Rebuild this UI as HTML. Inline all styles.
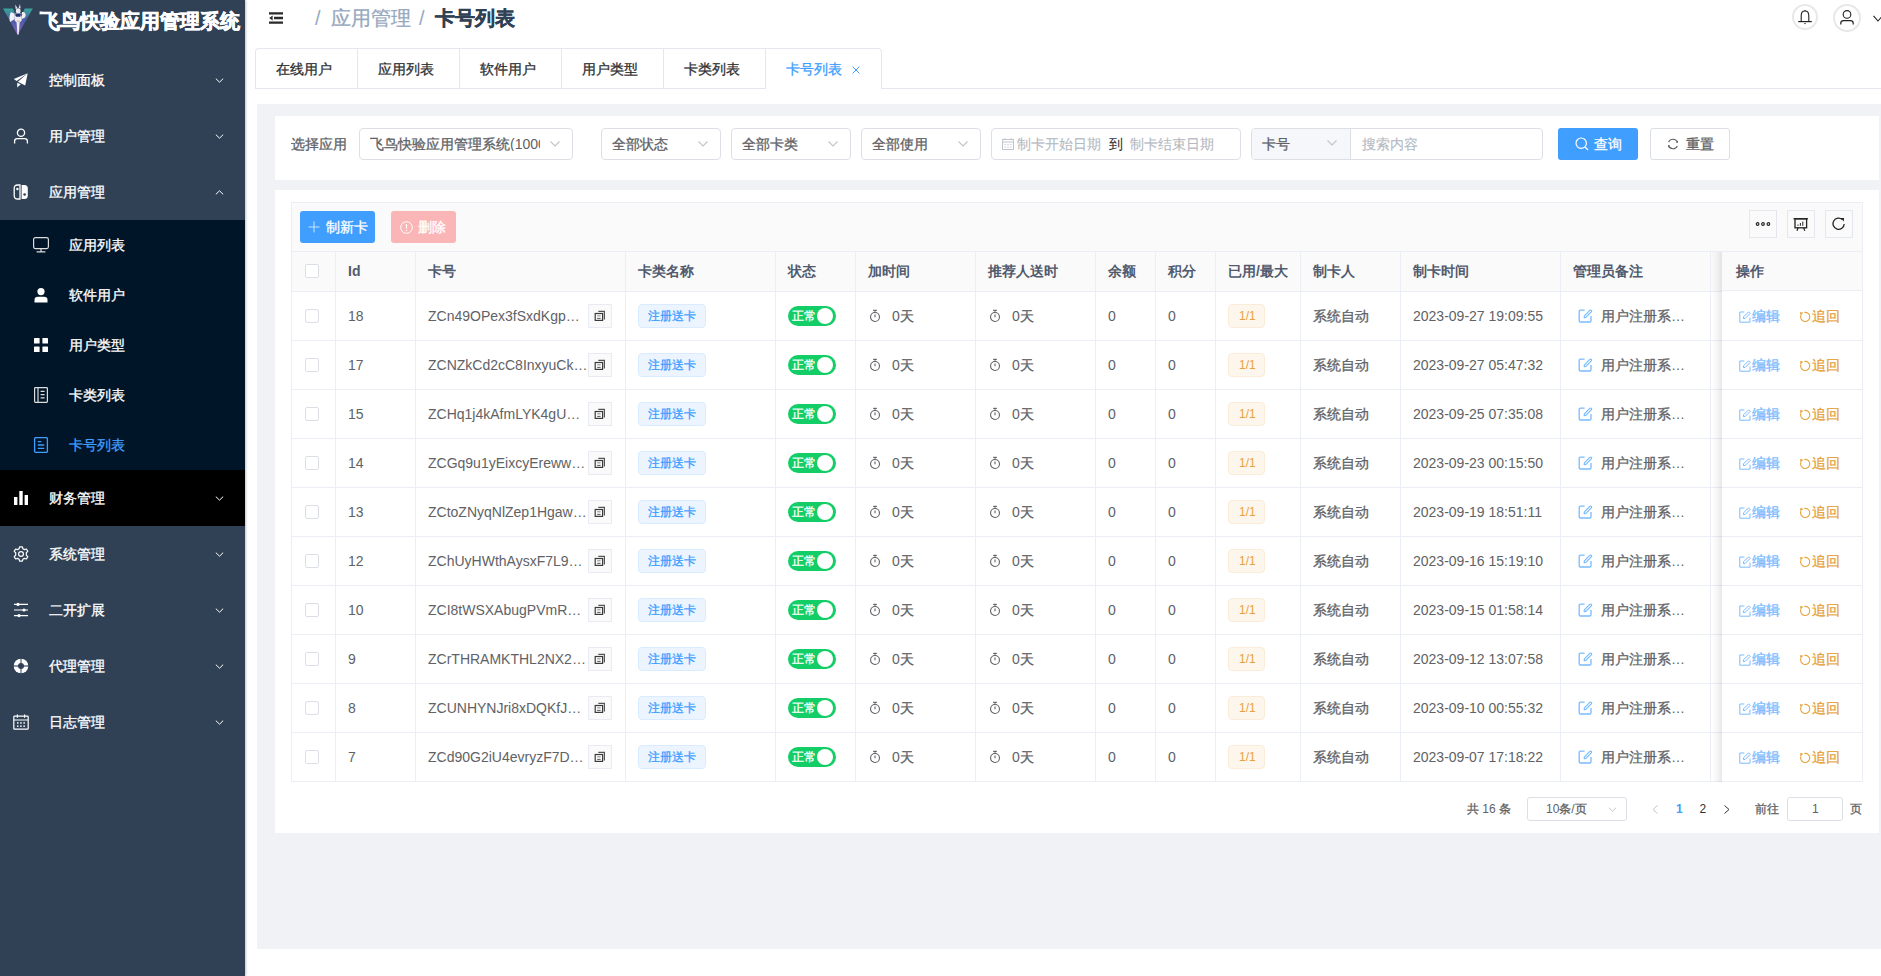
<!DOCTYPE html>
<html><head><meta charset="utf-8"><title>卡号列表</title><style>
*{box-sizing:border-box}
svg{display:block}
html,body{margin:0;padding:0}
body{width:1881px;height:976px;position:relative;overflow:hidden;background:#fff;font-family:"Liberation Sans",sans-serif;color:#606266}
.a{position:absolute}
.t{position:absolute;white-space:nowrap;line-height:1}
#side{left:0;top:0;width:245px;height:976px;background:#304156;box-shadow:1px 0 2px rgba(0,21,41,0.25)}
.mi{position:absolute;left:0;width:245px;height:56px;color:#fff;font-size:14px}
.mi .ic{position:absolute;left:13px;top:20px;width:16px;height:16px}
.mi .tx{position:absolute;left:49px;top:20px;line-height:16px}
.mi .ch{position:absolute;left:214.5px;top:25.6px;width:9px;height:5px;color:#fff}
.sub{position:absolute;left:0;top:220px;width:245px;height:250px;background:#001528}
.si{position:absolute;left:0;width:245px;height:50px;color:#fff;font-size:14px}
.si .ic{position:absolute;left:33px;top:17px;width:16px;height:16px}
.si .tx{position:absolute;left:69px;top:17px;line-height:16px}
.tab{position:absolute;top:48px;height:41px;border-top:1px solid #e4e7ed;border-left:1px solid #e4e7ed;font-size:14px;color:#303133}
.tab span{position:absolute;top:13px;line-height:14px;left:20px}
.sel{position:absolute;top:128px;height:32px;border:1px solid #dcdfe6;border-radius:4px;background:#fff;font-size:14px;color:#606266}
.sel .v{position:absolute;left:10px;top:8px;line-height:14px;white-space:nowrap;overflow:hidden}
.sel .ch{position:absolute;right:12px;top:12px;width:10px;height:6px;color:#c0c4cc}
.cell{position:absolute;font-size:14px;color:#606266;white-space:nowrap;line-height:14px}
.z{font-style:normal;-webkit-text-stroke:0.3px currentColor}
.ttl .z{-webkit-text-stroke:0.6px #fff}
.hd .z{-webkit-text-stroke:0}
.ph .z{-webkit-text-stroke:0.1px currentColor}
.hd{position:absolute;font-size:14px;color:#515a6e;font-weight:bold;white-space:nowrap;line-height:14px}
</style></head>
<body>
<div id="side" class="a"><div class="a" style="left:0px;top:0px"><svg width="40" height="40" viewBox="0 0 40 40">
<defs><linearGradient id="lg" x1="0" y1="0" x2="0" y2="1"><stop offset="0" stop-color="#37a89a"/><stop offset="0.45" stop-color="#4d5aa6"/><stop offset="1" stop-color="#8a66c0"/></linearGradient></defs>
<path d="M3 8.4 L32.8 8.4 L17.6 35 Z M12.8 8.4 L24.8 8.4 L18.6 21 Z" fill="url(#lg)" fill-rule="evenodd"/>
<path d="M15.2 4.4 L17.6 8.2 L15.6 9 Z M20 4 L18.6 8 L20.6 8.6 Z" fill="#e4e2ee"/>
<ellipse cx="18.2" cy="10.8" rx="2.4" ry="2.6" fill="#eeeaf2"/>
<path d="M11 12 Q8.6 16 10 22 Q12 21 14.6 19 L15 14 Z" fill="#f2f0f6"/>
<path d="M22 12 Q25.8 11.6 25.6 15.6 Q25 19 21.6 18.6 Z" fill="#f2f0f6"/>
<path d="M15.4 13 L21.2 13 L21.8 20.6 L19.6 22.4 L18.7 34.6 L17.4 34.6 L16.6 22.6 L14.6 20.6 Z" fill="#ecebf2"/>
<path d="M15.4 13.6 L21 13.6 L20.4 16.8 L16.2 16.8 Z" fill="#23306a"/>
<path d="M14.4 14.4 L15.6 14 L15.4 16.6 Z M21 14 L22.4 14.6 L21 16.4 Z" fill="#3a4a8e"/>
<path d="M16.8 20.8 L20 20.8 L19.8 21.6 L17 21.6 Z" fill="#e08a80"/>
</svg></div><div class="t ttl" style="left:40px;top:11px;font-size:20px;font-weight:bold;color:#fff;line-height:20px"><i class="z">飞鸟快验应用管理系统</i></div><div class="mi" style="top:52px;"><div class="ic"><svg width="16" height="16" viewBox="0 0 16 16"><path d="M0.8 6.9 L14.7 1.2 L3.6 8.9 Z M4.9 9.7 L14.7 1.2 L12.2 13.4 Z M4.2 10.8 L4.2 15.6 L7.8 12.3 Z" fill="#fff"/></svg></div><div class="tx"><i class="z">控制面板</i></div><div class="ch"><svg width="9" height="5" viewBox="0 0 9 5"><path d="M0.8 0.6 L4.5 4.2 L8.2 0.6" fill="none" stroke="currentColor" stroke-width="1"/></svg></div></div><div class="mi" style="top:108px;"><div class="ic"><svg width="16" height="16" viewBox="0 0 16 16"><circle cx="8" cy="4.8" r="3.6" fill="none" stroke="#fff" stroke-width="1.3"/><path d="M1.6 15.5 V13.2 Q1.6 10.6 4.4 10.6 H11.6 Q14.4 10.6 14.4 13.2 V15.5" fill="none" stroke="#fff" stroke-width="1.3"/></svg></div><div class="tx"><i class="z">用户管理</i></div><div class="ch"><svg width="9" height="5" viewBox="0 0 9 5"><path d="M0.8 0.6 L4.5 4.2 L8.2 0.6" fill="none" stroke="currentColor" stroke-width="1"/></svg></div></div><div class="mi" style="top:164px;"><div class="ic"><svg width="16" height="16" viewBox="0 0 16 16"><path d="M7 1 H4.5 Q1.2 1 1.2 4.5 V11.5 Q1.2 15 4.5 15 H7 Z" fill="none" stroke="#fff" stroke-width="1.3"/><circle cx="4.4" cy="5" r="1.2" fill="#fff"/><path d="M8.6 1 H11.5 Q14.8 1 14.8 4.5 V11.5 Q14.8 15 11.5 15 H8.6 Z" fill="#fff"/><circle cx="11.6" cy="10.5" r="1.3" fill="#304156"/></svg></div><div class="tx"><i class="z">应用管理</i></div><div class="ch"><svg width="9" height="5" viewBox="0 0 9 5"><path d="M0.8 4.4 L4.5 0.8 L8.2 4.4" fill="none" stroke="currentColor" stroke-width="1"/></svg></div></div><div class="sub"><div class="si" style="top:0px;"><div class="ic"><svg width="16" height="16" viewBox="0 0 16 16"><rect x="0.6" y="0.6" width="14.8" height="11" rx="1.8" fill="none" stroke="#ddd" stroke-width="1.2"/><path d="M8 11.6 V14.6 M3.6 14.8 H12.4" stroke="#ddd" stroke-width="1.2"/></svg></div><div class="tx"><i class="z">应用列表</i></div></div><div class="si" style="top:50px;"><div class="ic"><svg width="16" height="16" viewBox="0 0 16 16"><circle cx="8" cy="4.6" r="3.6" fill="#fff"/><path d="M1.5 15.5 V13 Q1.5 9.8 5 9.8 H11 Q14.5 9.8 14.5 13 V15.5 Z" fill="#fff"/></svg></div><div class="tx"><i class="z">软件用户</i></div></div><div class="si" style="top:100px;"><div class="ic"><svg width="16" height="16" viewBox="0 0 16 16"><rect x="1" y="1" width="5.6" height="5.6" rx="0.6" fill="#fff"/><rect x="9.4" y="1" width="5.6" height="5.6" rx="0.6" fill="#fff"/><rect x="1" y="9.4" width="5.6" height="5.6" rx="0.6" fill="#fff"/><rect x="9.4" y="9.4" width="5.6" height="5.6" rx="0.6" fill="#fff"/></svg></div><div class="tx"><i class="z">用户类型</i></div></div><div class="si" style="top:150px;"><div class="ic"><svg width="16" height="16" viewBox="0 0 16 16"><rect x="1.6" y="0.6" width="12.8" height="14.8" rx="0.8" fill="none" stroke="#ddd" stroke-width="1.2"/><path d="M5 0.6 V15.4 M7.6 4.4 H11.6 M7.6 7.6 H11.6 M7.6 10.8 H11.6" stroke="#ddd" stroke-width="1.2"/></svg></div><div class="tx"><i class="z">卡类列表</i></div></div><div class="si" style="top:200px;color:#409eff;"><div class="ic"><svg width="16" height="16" viewBox="0 0 16 16"><rect x="1.6" y="0.6" width="12.8" height="14.8" rx="1.2" fill="none" stroke="#409eff" stroke-width="1.3"/><path d="M4.8 4.6 H8.4 M4.8 8 H11.2 M4.8 11.4 H11.2" stroke="#409eff" stroke-width="1.3"/></svg></div><div class="tx"><i class="z">卡号列表</i></div></div></div><div class="mi" style="top:470px;background:#000;"><div class="ic"><svg width="16" height="16" viewBox="0 0 16 16"><rect x="1" y="7" width="3.4" height="8" fill="#fff"/><rect x="6.3" y="1" width="3.4" height="14" fill="#fff"/><rect x="11.6" y="5" width="3.4" height="10" fill="#fff"/></svg></div><div class="tx"><i class="z">财务管理</i></div><div class="ch"><svg width="9" height="5" viewBox="0 0 9 5"><path d="M0.8 0.6 L4.5 4.2 L8.2 0.6" fill="none" stroke="currentColor" stroke-width="1"/></svg></div></div><div class="mi" style="top:526px;"><div class="ic"><svg width="16" height="16" viewBox="0 0 16 16"><path d="M6.6 0.8 H9.4 L9.9 2.8 L11.4 3.6 L13.4 3 L14.8 5.4 L13.3 6.8 V9.2 L14.8 10.6 L13.4 13 L11.4 12.4 L9.9 13.2 L9.4 15.2 H6.6 L6.1 13.2 L4.6 12.4 L2.6 13 L1.2 10.6 L2.7 9.2 V6.8 L1.2 5.4 L2.6 3 L4.6 3.6 L6.1 2.8 Z" fill="none" stroke="#fff" stroke-width="1.2" stroke-linejoin="round"/><circle cx="8" cy="8" r="2.4" fill="none" stroke="#fff" stroke-width="1.2"/></svg></div><div class="tx"><i class="z">系统管理</i></div><div class="ch"><svg width="9" height="5" viewBox="0 0 9 5"><path d="M0.8 0.6 L4.5 4.2 L8.2 0.6" fill="none" stroke="currentColor" stroke-width="1"/></svg></div></div><div class="mi" style="top:582px;"><div class="ic"><svg width="16" height="16" viewBox="0 0 16 16"><path d="M1 2.4 H15 M1 8 H15 M1 13.6 H15" stroke="#fff" stroke-width="1.2"/><circle cx="5" cy="2.4" r="1.6" fill="#fff"/><circle cx="11" cy="8" r="1.6" fill="#fff"/><circle cx="6" cy="13.6" r="1.6" fill="#fff"/></svg></div><div class="tx"><i class="z">二开扩展</i></div><div class="ch"><svg width="9" height="5" viewBox="0 0 9 5"><path d="M0.8 0.6 L4.5 4.2 L8.2 0.6" fill="none" stroke="currentColor" stroke-width="1"/></svg></div></div><div class="mi" style="top:638px;"><div class="ic"><svg width="16" height="16" viewBox="0 0 16 16"><circle cx="8" cy="8" r="7.3" fill="#fff"/><path d="M8 0 V16 M0 8 H16" stroke="#304156" stroke-width="1.3" stroke-opacity="0.75"/><circle cx="8" cy="8" r="3" fill="#304156"/></svg></div><div class="tx"><i class="z">代理管理</i></div><div class="ch"><svg width="9" height="5" viewBox="0 0 9 5"><path d="M0.8 0.6 L4.5 4.2 L8.2 0.6" fill="none" stroke="currentColor" stroke-width="1"/></svg></div></div><div class="mi" style="top:694px;"><div class="ic"><svg width="16" height="16" viewBox="0 0 16 16"><rect x="0.8" y="2.2" width="14.4" height="13" rx="0.8" fill="none" stroke="#fff" stroke-width="1.2"/><path d="M0.8 6 H15.2 M4.4 0.6 V3.8 M11.6 0.6 V3.8" stroke="#fff" stroke-width="1.2"/><g fill="#fff"><rect x="4" y="8.2" width="1.5" height="1.5"/><rect x="7.2" y="8.2" width="1.5" height="1.5"/><rect x="10.4" y="8.2" width="1.5" height="1.5"/><rect x="4" y="11.4" width="1.5" height="1.5"/><rect x="7.2" y="11.4" width="1.5" height="1.5"/><rect x="10.4" y="11.4" width="1.5" height="1.5"/></g></svg></div><div class="tx"><i class="z">日志管理</i></div><div class="ch"><svg width="9" height="5" viewBox="0 0 9 5"><path d="M0.8 0.6 L4.5 4.2 L8.2 0.6" fill="none" stroke="currentColor" stroke-width="1"/></svg></div></div></div>
<div class="a" style="left:269px;top:12px"><svg width="14" height="12" viewBox="0 0 14 12"><path d="M0 1.4 H14 M5 6 H14 M0 10.6 H14" stroke="#2a2a2a" stroke-width="2.3"/><path d="M0.2 6 L3.6 3.6 V8.4 Z" fill="#2a2a2a"/></svg></div><div class="t" style="left:315px;top:8px;font-size:20px;line-height:20px;color:#97a8be">/</div><div class="t" style="left:331px;top:8px;font-size:20px;line-height:20px;color:#97a8be"><i class="z">应用管理</i></div><div class="t" style="left:419px;top:8px;font-size:20px;line-height:20px;color:#97a8be">/</div><div class="t" style="left:435px;top:8px;font-size:20px;line-height:20px;color:#304156;font-weight:bold"><i class="z">卡号列表</i></div><div class="a" style="left:1792px;top:4px;width:26px;height:26px;border:2px solid #e8e8e8;border-radius:50%"></div><div class="a" style="left:1798px;top:9px"><svg width="14" height="16" viewBox="0 0 14 16"><path d="M3.2 12.5 V6.8 Q3.2 2 7 2 Q10.8 2 10.8 6.8 V12.5" fill="none" stroke="#222" stroke-width="1.1"/><path d="M0.2 12.6 H13.8" stroke="#222" stroke-width="1.2"/><path d="M6.1 2 L7 0.8 L7.9 2 Z" fill="#222"/><path d="M6.3 14.6 H7.7" stroke="#222" stroke-width="1"/></svg></div><div class="a" style="left:1833px;top:4px;width:28px;height:28px;border:2px solid #e8e8e8;border-radius:50%"></div><div class="a" style="left:1840px;top:10px"><svg width="14" height="15" viewBox="0 0 14 15"><circle cx="7" cy="4.4" r="3.8" fill="none" stroke="#222" stroke-width="1.1"/><path d="M0.8 14.6 V13 Q0.8 10.6 3.6 10.6 H10.4 Q13.2 10.6 13.2 13 V14.6" fill="none" stroke="#222" stroke-width="1.2"/></svg></div><div class="a" style="left:1873px;top:15px"><svg width="10" height="8" viewBox="0 0 10 8"><path d="M0.5 0.8 L5 6 L9.5 0.8" fill="none" stroke="#222" stroke-width="1.1"/></svg></div><div class="tab" style="left:255px;width:102px;border-bottom:1px solid #e4e7ed;border-top-left-radius:4px;"><span><i class="z">在线用户</i></span></div><div class="tab" style="left:357px;width:102px;border-bottom:1px solid #e4e7ed;"><span><i class="z">应用列表</i></span></div><div class="tab" style="left:459px;width:102px;border-bottom:1px solid #e4e7ed;"><span><i class="z">软件用户</i></span></div><div class="tab" style="left:561px;width:102px;border-bottom:1px solid #e4e7ed;"><span><i class="z">用户类型</i></span></div><div class="tab" style="left:663px;width:102px;border-bottom:1px solid #e4e7ed;"><span><i class="z">卡类列表</i></span></div><div class="tab" style="left:765px;width:117px;border-right:1px solid #e4e7ed;border-top-right-radius:4px;color:#409eff"><span><i class="z">卡号列表</i></span><svg class="a" style="left:86px;top:17px" width="8" height="8" viewBox="0 0 8 8"><path d="M0.6 0.6 L7.4 7.4 M7.4 0.6 L0.6 7.4" stroke="#409eff" stroke-width="1"/></svg></div><div class="a" style="left:881px;top:88px;width:1000px;height:1px;background:#e4e7ed"></div><div class="a" style="left:257px;top:104px;width:1624px;height:845px;background:#f0f2f5"></div><div class="a" style="left:275px;top:116px;width:1604px;height:64px;background:#fff"></div><div class="t" style="left:291px;top:137px;font-size:14px;line-height:14px;color:#606266"><i class="z">选择应用</i></div><div class="sel" style="left:359px;width:214px;"><div class="v" style="width:170px"><i class="z">飞鸟快验应用管理系统</i>(10001)</div><div class="ch"><svg width="10" height="6" viewBox="0 0 10 6"><path d="M0.5 0.5 L5 5 L9.5 0.5" fill="none" stroke="currentColor" stroke-width="1.1"/></svg></div></div><div class="sel" style="left:601px;width:120px;"><div class="v" style="width:76px"><i class="z">全部状态</i></div><div class="ch"><svg width="10" height="6" viewBox="0 0 10 6"><path d="M0.5 0.5 L5 5 L9.5 0.5" fill="none" stroke="currentColor" stroke-width="1.1"/></svg></div></div><div class="sel" style="left:731px;width:120px;"><div class="v" style="width:76px"><i class="z">全部卡类</i></div><div class="ch"><svg width="10" height="6" viewBox="0 0 10 6"><path d="M0.5 0.5 L5 5 L9.5 0.5" fill="none" stroke="currentColor" stroke-width="1.1"/></svg></div></div><div class="sel" style="left:861px;width:120px;"><div class="v" style="width:76px"><i class="z">全部使用</i></div><div class="ch"><svg width="10" height="6" viewBox="0 0 10 6"><path d="M0.5 0.5 L5 5 L9.5 0.5" fill="none" stroke="currentColor" stroke-width="1.1"/></svg></div></div><div class="sel" style="left:991px;width:250px"></div><div class="a" style="left:1002px;top:138px"><svg width="12" height="12" viewBox="0 0 12 12"><rect x="0.5" y="1.5" width="11" height="10" fill="none" stroke="#c0c4cc" stroke-width="1"/><path d="M0.5 4 H11.5 M3 0 V2 M9 0 V2" stroke="#c0c4cc"/><g fill="#c0c4cc"><rect x="2.5" y="6" width="1.2" height="1"/><rect x="5.4" y="6" width="1.2" height="1"/><rect x="8.3" y="6" width="1.2" height="1"/><rect x="2.5" y="8.5" width="1.2" height="1"/><rect x="5.4" y="8.5" width="1.2" height="1"/><rect x="8.3" y="8.5" width="1.2" height="1"/></g></svg></div><div class="t ph" style="left:1017px;top:137px;font-size:14px;line-height:14px;color:#b4b9c2"><i class="z">制卡开始日期</i></div><div class="t ph" style="left:1109px;top:137px;font-size:14px;line-height:14px;color:#303133"><i class="z">到</i></div><div class="t ph" style="left:1130px;top:137px;font-size:14px;line-height:14px;color:#b4b9c2"><i class="z">制卡结束日期</i></div><div class="sel" style="left:1251px;width:292px"></div><div class="a" style="left:1252px;top:129px;width:99px;height:30px;background:#f5f7fa;border-right:1px solid #dcdfe6;border-radius:3px 0 0 3px"></div><div class="t" style="left:1262px;top:137px;font-size:14px;line-height:14px;color:#606266"><i class="z">卡号</i></div><div class="a" style="left:1327px;top:140px;width:10px;height:6px;color:#c0c4cc"><svg width="10" height="6" viewBox="0 0 10 6"><path d="M0.5 0.5 L5 5 L9.5 0.5" fill="none" stroke="currentColor" stroke-width="1.1"/></svg></div><div class="t ph" style="left:1362px;top:137px;font-size:14px;line-height:14px;color:#b4b9c2"><i class="z">搜索内容</i></div><div class="a" style="left:1558px;top:128px;width:80px;height:32px;background:#409eff;border-radius:3px"></div><div class="a" style="left:1575px;top:137px"><svg width="14" height="14" viewBox="0 0 14 14"><circle cx="6.2" cy="6.2" r="5.2" fill="none" stroke="#fff" stroke-width="1.2"/><path d="M10 10 L13 13" stroke="#fff" stroke-width="1.2"/></svg></div><div class="t" style="left:1594px;top:137px;font-size:14px;line-height:14px;color:#fff"><i class="z">查询</i></div><div class="a" style="left:1650px;top:128px;width:80px;height:32px;border:1px solid #dcdfe6;border-radius:3px;background:#fff"></div><div class="a" style="left:1667px;top:138px"><svg width="12" height="12" viewBox="0 0 12 12"><path d="M10.5 4.5 A4.8 4.8 0 0 0 1.6 4" fill="none" stroke="#606266" stroke-width="1.1"/><path d="M1.5 7.5 A4.8 4.8 0 0 0 10.4 8" fill="none" stroke="#606266" stroke-width="1.1"/><path d="M8.8 4.6 L11 4.8 L11 2.4 Z M3.2 7.4 L1 7.2 L1 9.6 Z" fill="#606266"/></svg></div><div class="t" style="left:1686px;top:137px;font-size:14px;line-height:14px;color:#606266"><i class="z">重置</i></div><div class="a" style="left:275px;top:190px;width:1604px;height:643px;background:#fff"></div><div class="a" style="left:291px;top:202px;width:1572px;height:50px;background:#fafafa;border:1px solid #ebeef5;border-bottom:none"></div><div class="a" style="left:300px;top:211px;width:75px;height:32px;background:#409eff;border-radius:3px"></div><div class="a" style="left:308px;top:221px"><svg width="12" height="12" viewBox="0 0 12 12"><path d="M6 0.5 V11.5 M0.5 6 H11.5" stroke="#fff" stroke-width="1.1" opacity="0.7"/></svg></div><div class="t" style="left:326px;top:220px;font-size:14px;line-height:14px;color:#fff"><i class="z">制新卡</i></div><div class="a" style="left:391px;top:211px;width:65px;height:32px;background:#fab6b6;border-radius:3px"></div><div class="a" style="left:400px;top:221px"><svg width="13" height="13" viewBox="0 0 13 13"><circle cx="6.5" cy="6.5" r="5.8" fill="none" stroke="#fff" stroke-width="1"/><path d="M6.5 3 V7.6" stroke="#fff" stroke-width="1.2"/><circle cx="6.5" cy="9.4" r="0.7" fill="#fff"/></svg></div><div class="t" style="left:418px;top:220px;font-size:14px;line-height:14px;color:#fff"><i class="z">删除</i></div><div class="a" style="left:1749px;top:210px;width:28px;height:28px;border:1px solid #e4e7ed;background:#fafafa"></div><div class="a" style="left:1787px;top:210px;width:28px;height:28px;border:1px solid #e4e7ed;background:#fafafa"></div><div class="a" style="left:1825px;top:210px;width:28px;height:28px;border:1px solid #e4e7ed;background:#fafafa"></div><div class="a" style="left:1755px;top:221px"><svg width="16" height="6" viewBox="0 0 16 6"><circle cx="2.6" cy="3" r="1.35" fill="none" stroke="#222" stroke-width="1.1"/><circle cx="8" cy="3" r="1.35" fill="none" stroke="#222" stroke-width="1.1"/><circle cx="13.4" cy="3" r="1.35" fill="none" stroke="#222" stroke-width="1.1"/></svg></div><div class="a" style="left:1793px;top:218px"><svg width="16" height="14" viewBox="0 0 16 14"><path d="M0.5 0.8 H15" stroke="#222" stroke-width="1.3"/><rect x="2" y="0.8" width="11.6" height="9" fill="none" stroke="#222" stroke-width="1.3"/><path d="M5 6.5 V7.8 M7.4 5 V7.8 M9.8 3.6 V7.8" stroke="#222" stroke-width="1"/><path d="M5 9.8 L4 12.8 M10.6 9.8 L11.8 12.8" stroke="#222" stroke-width="1.2"/></svg></div><div class="a" style="left:1832px;top:217px"><svg width="14" height="14" viewBox="0 0 14 14"><path d="M12.2 7 A5.6 5.6 0 1 1 10.4 2.6" fill="none" stroke="#222" stroke-width="1.3"/><path d="M8.6 1 L12 1 L11.8 4.6 Z" fill="#222"/></svg></div><div class="a" style="left:291px;top:251px;width:1572px;height:41px;background:#fafafa;border-top:1px solid #ebeef5;border-bottom:1px solid #ebeef5"></div><div class="a" style="left:291px;top:340px;width:1572px;height:1px;background:#ebeef5"></div><div class="a" style="left:291px;top:389px;width:1572px;height:1px;background:#ebeef5"></div><div class="a" style="left:291px;top:438px;width:1572px;height:1px;background:#ebeef5"></div><div class="a" style="left:291px;top:487px;width:1572px;height:1px;background:#ebeef5"></div><div class="a" style="left:291px;top:536px;width:1572px;height:1px;background:#ebeef5"></div><div class="a" style="left:291px;top:585px;width:1572px;height:1px;background:#ebeef5"></div><div class="a" style="left:291px;top:634px;width:1572px;height:1px;background:#ebeef5"></div><div class="a" style="left:291px;top:683px;width:1572px;height:1px;background:#ebeef5"></div><div class="a" style="left:291px;top:732px;width:1572px;height:1px;background:#ebeef5"></div><div class="a" style="left:291px;top:781px;width:1572px;height:1px;background:#ebeef5"></div><div class="a" style="left:291px;top:251px;width:1px;height:531px;background:#ebeef5"></div><div class="a" style="left:335px;top:251px;width:1px;height:531px;background:#ebeef5"></div><div class="a" style="left:415px;top:251px;width:1px;height:531px;background:#ebeef5"></div><div class="a" style="left:625px;top:251px;width:1px;height:531px;background:#ebeef5"></div><div class="a" style="left:775px;top:251px;width:1px;height:531px;background:#ebeef5"></div><div class="a" style="left:855px;top:251px;width:1px;height:531px;background:#ebeef5"></div><div class="a" style="left:975px;top:251px;width:1px;height:531px;background:#ebeef5"></div><div class="a" style="left:1095px;top:251px;width:1px;height:531px;background:#ebeef5"></div><div class="a" style="left:1155px;top:251px;width:1px;height:531px;background:#ebeef5"></div><div class="a" style="left:1215px;top:251px;width:1px;height:531px;background:#ebeef5"></div><div class="a" style="left:1300px;top:251px;width:1px;height:531px;background:#ebeef5"></div><div class="a" style="left:1400px;top:251px;width:1px;height:531px;background:#ebeef5"></div><div class="a" style="left:1560px;top:251px;width:1px;height:531px;background:#ebeef5"></div><div class="a" style="left:1710px;top:251px;width:1px;height:531px;background:#ebeef5"></div><div class="a" style="left:1862px;top:202px;width:1px;height:580px;background:#ebeef5"></div><div class="a" style="left:1711px;top:252px;width:11px;height:530px;background:linear-gradient(to right,rgba(0,0,0,0) 0%,rgba(0,0,0,0.03) 50%,rgba(0,0,0,0.09) 100%)"></div><div class="a" style="left:1722px;top:252px;width:140px;height:530px;background:#fff"></div><div class="a" style="left:1722px;top:252px;width:140px;height:39px;background:#fafafa;border-bottom:1px solid #ebeef5"></div><div class="a" style="left:1722px;top:340px;width:140px;height:1px;background:#ebeef5"></div><div class="a" style="left:1722px;top:389px;width:140px;height:1px;background:#ebeef5"></div><div class="a" style="left:1722px;top:438px;width:140px;height:1px;background:#ebeef5"></div><div class="a" style="left:1722px;top:487px;width:140px;height:1px;background:#ebeef5"></div><div class="a" style="left:1722px;top:536px;width:140px;height:1px;background:#ebeef5"></div><div class="a" style="left:1722px;top:585px;width:140px;height:1px;background:#ebeef5"></div><div class="a" style="left:1722px;top:634px;width:140px;height:1px;background:#ebeef5"></div><div class="a" style="left:1722px;top:683px;width:140px;height:1px;background:#ebeef5"></div><div class="a" style="left:1722px;top:732px;width:140px;height:1px;background:#ebeef5"></div><div class="a" style="left:1722px;top:781px;width:140px;height:1px;background:#ebeef5"></div><div class="hd" style="left:1736px;top:264px"><i class="z">操作</i></div><div class="a" style="left:305px;top:264px;width:14px;height:14px;border:1px solid #dcdfe6;border-radius:2px;background:#fff"></div><div class="hd" style="left:348px;top:264px">Id</div><div class="hd" style="left:428px;top:264px"><i class="z">卡号</i></div><div class="hd" style="left:638px;top:264px"><i class="z">卡类名称</i></div><div class="hd" style="left:788px;top:264px"><i class="z">状态</i></div><div class="hd" style="left:868px;top:264px"><i class="z">加时间</i></div><div class="hd" style="left:988px;top:264px"><i class="z">推荐人送时</i></div><div class="hd" style="left:1108px;top:264px"><i class="z">余额</i></div><div class="hd" style="left:1168px;top:264px"><i class="z">积分</i></div><div class="hd" style="left:1228px;top:264px"><i class="z">已用</i>/<i class="z">最大</i></div><div class="hd" style="left:1313px;top:264px"><i class="z">制卡人</i></div><div class="hd" style="left:1413px;top:264px"><i class="z">制卡时间</i></div><div class="hd" style="left:1573px;top:264px"><i class="z">管理员备注</i></div><div class="a" style="left:305px;top:309px;width:14px;height:14px;border:1px solid #dcdfe6;border-radius:2px;background:#fff"></div><div class="cell" style="left:348px;top:309px">18</div><div class="cell" style="left:428px;top:309px;">ZCn49OPex3fSxdKgp…</div><div class="a" style="left:588px;top:304px;width:24px;height:24px;border:1px solid #e8ebf3;background:#fafafa"></div><div class="a" style="left:594px;top:310px"><svg width="12" height="12" viewBox="0 0 12 12"><path d="M4.3 1.4 H10.4 V9.5" fill="none" stroke="#555" stroke-width="1.2"/><rect x="1.2" y="3.5" width="7.4" height="6.9" fill="none" stroke="#3a3a3a" stroke-width="1.2"/><path d="M3.2 5.8 H6.6" stroke="#999" stroke-width="1.2"/><path d="M3.2 8.4 H6.6" stroke="#555" stroke-width="1"/></svg></div><div class="a" style="left:638px;top:304px;width:68px;height:24px;border:1px solid #d9ecff;background:#ecf5ff;border-radius:4px"></div><div class="t" style="left:648px;top:310px;font-size:12px;line-height:12px;color:#409eff"><i class="z">注册送卡</i></div><div class="a" style="left:788px;top:306px;width:48px;height:20px;background:#13ce66;border-radius:10px"></div><div class="a" style="left:817px;top:308px;width:16px;height:16px;background:#fff;border-radius:50%"></div><div class="t" style="left:792px;top:310px;font-size:12px;line-height:12px;color:#fff"><i class="z">正常</i></div><div class="a" style="left:869px;top:308px"><svg width="12" height="14" viewBox="0 0 12 14"><circle cx="6" cy="9" r="4.45" fill="none" stroke="#606266" stroke-width="1.1"/><path d="M4.2 2.4 H7.8" stroke="#606266" stroke-width="1.2"/><path d="M6 2.4 V4.6" stroke="#606266" stroke-width="0.9"/><path d="M6 6.4 V9.2" stroke="#606266" stroke-width="1.1"/></svg></div><div class="cell" style="left:892px;top:309px">0<i class="z">天</i></div><div class="a" style="left:989px;top:308px"><svg width="12" height="14" viewBox="0 0 12 14"><circle cx="6" cy="9" r="4.45" fill="none" stroke="#606266" stroke-width="1.1"/><path d="M4.2 2.4 H7.8" stroke="#606266" stroke-width="1.2"/><path d="M6 2.4 V4.6" stroke="#606266" stroke-width="0.9"/><path d="M6 6.4 V9.2" stroke="#606266" stroke-width="1.1"/></svg></div><div class="cell" style="left:1012px;top:309px">0<i class="z">天</i></div><div class="cell" style="left:1108px;top:309px">0</div><div class="cell" style="left:1168px;top:309px">0</div><div class="a" style="left:1228px;top:304px;width:37px;height:24px;border:1px solid #faecd8;background:#fdf6ec;border-radius:4px"></div><div class="t" style="left:1239px;top:310px;font-size:12px;line-height:12px;color:#e6a23c">1/1</div><div class="cell" style="left:1313px;top:309px"><i class="z">系统自动</i></div><div class="cell" style="left:1413px;top:309px">2023-09-27 19:09:55</div><div class="a" style="left:1578px;top:309px"><svg width="15" height="14" viewBox="0 0 15 14"><path d="M6.6 1.2 H2.4 Q1.2 1.2 1.2 2.4 V11.8 Q1.2 13 2.4 13 H11.8 Q13 13 13 11.8 V7" fill="none" stroke="#79bbff" stroke-width="1.3"/><path d="M6.2 8.6 L6.4 6.8 L11.8 1.4 Q12.6 0.7 13.3 1.4 Q14 2.1 13.3 2.9 L7.9 8.3 Z" fill="none" stroke="#79bbff" stroke-width="1.2" stroke-linejoin="round"/></svg></div><div class="cell" style="left:1601px;top:309px"><i class="z">用户注册系</i>…</div><div class="a" style="left:1739px;top:311px"><svg width="12" height="12" viewBox="0 0 12 12"><path d="M5.4 1 H0.8 V11.2 H11 V6.6" fill="none" stroke="#79bbff" stroke-width="1"/><path d="M4.4 7.6 L4.6 5.8 L9.6 0.8 L11.2 2.4 L6.2 7.4 Z" fill="none" stroke="#79bbff" stroke-width="1"/></svg></div><div class="cell" style="left:1752px;top:309px;color:#79bbff"><i class="z">编辑</i></div><div class="a" style="left:1799px;top:311px"><svg width="12" height="12" viewBox="0 0 12 12"><path d="M5.4 1.4 A4.6 4.6 0 1 1 1.9 4.2" fill="none" stroke="#e6a23c" stroke-width="1.1"/><path d="M0.9 1.3 L4.4 1.5 L1.7 4.6 Z" fill="#e6a23c"/></svg></div><div class="cell" style="left:1812px;top:309px;color:#e6a23c"><i class="z">追回</i></div><div class="a" style="left:305px;top:358px;width:14px;height:14px;border:1px solid #dcdfe6;border-radius:2px;background:#fff"></div><div class="cell" style="left:348px;top:358px">17</div><div class="cell" style="left:428px;top:358px;">ZCNZkCd2cC8InxyuCk…</div><div class="a" style="left:588px;top:353px;width:24px;height:24px;border:1px solid #e8ebf3;background:#fafafa"></div><div class="a" style="left:594px;top:359px"><svg width="12" height="12" viewBox="0 0 12 12"><path d="M4.3 1.4 H10.4 V9.5" fill="none" stroke="#555" stroke-width="1.2"/><rect x="1.2" y="3.5" width="7.4" height="6.9" fill="none" stroke="#3a3a3a" stroke-width="1.2"/><path d="M3.2 5.8 H6.6" stroke="#999" stroke-width="1.2"/><path d="M3.2 8.4 H6.6" stroke="#555" stroke-width="1"/></svg></div><div class="a" style="left:638px;top:353px;width:68px;height:24px;border:1px solid #d9ecff;background:#ecf5ff;border-radius:4px"></div><div class="t" style="left:648px;top:359px;font-size:12px;line-height:12px;color:#409eff"><i class="z">注册送卡</i></div><div class="a" style="left:788px;top:355px;width:48px;height:20px;background:#13ce66;border-radius:10px"></div><div class="a" style="left:817px;top:357px;width:16px;height:16px;background:#fff;border-radius:50%"></div><div class="t" style="left:792px;top:359px;font-size:12px;line-height:12px;color:#fff"><i class="z">正常</i></div><div class="a" style="left:869px;top:357px"><svg width="12" height="14" viewBox="0 0 12 14"><circle cx="6" cy="9" r="4.45" fill="none" stroke="#606266" stroke-width="1.1"/><path d="M4.2 2.4 H7.8" stroke="#606266" stroke-width="1.2"/><path d="M6 2.4 V4.6" stroke="#606266" stroke-width="0.9"/><path d="M6 6.4 V9.2" stroke="#606266" stroke-width="1.1"/></svg></div><div class="cell" style="left:892px;top:358px">0<i class="z">天</i></div><div class="a" style="left:989px;top:357px"><svg width="12" height="14" viewBox="0 0 12 14"><circle cx="6" cy="9" r="4.45" fill="none" stroke="#606266" stroke-width="1.1"/><path d="M4.2 2.4 H7.8" stroke="#606266" stroke-width="1.2"/><path d="M6 2.4 V4.6" stroke="#606266" stroke-width="0.9"/><path d="M6 6.4 V9.2" stroke="#606266" stroke-width="1.1"/></svg></div><div class="cell" style="left:1012px;top:358px">0<i class="z">天</i></div><div class="cell" style="left:1108px;top:358px">0</div><div class="cell" style="left:1168px;top:358px">0</div><div class="a" style="left:1228px;top:353px;width:37px;height:24px;border:1px solid #faecd8;background:#fdf6ec;border-radius:4px"></div><div class="t" style="left:1239px;top:359px;font-size:12px;line-height:12px;color:#e6a23c">1/1</div><div class="cell" style="left:1313px;top:358px"><i class="z">系统自动</i></div><div class="cell" style="left:1413px;top:358px">2023-09-27 05:47:32</div><div class="a" style="left:1578px;top:358px"><svg width="15" height="14" viewBox="0 0 15 14"><path d="M6.6 1.2 H2.4 Q1.2 1.2 1.2 2.4 V11.8 Q1.2 13 2.4 13 H11.8 Q13 13 13 11.8 V7" fill="none" stroke="#79bbff" stroke-width="1.3"/><path d="M6.2 8.6 L6.4 6.8 L11.8 1.4 Q12.6 0.7 13.3 1.4 Q14 2.1 13.3 2.9 L7.9 8.3 Z" fill="none" stroke="#79bbff" stroke-width="1.2" stroke-linejoin="round"/></svg></div><div class="cell" style="left:1601px;top:358px"><i class="z">用户注册系</i>…</div><div class="a" style="left:1739px;top:360px"><svg width="12" height="12" viewBox="0 0 12 12"><path d="M5.4 1 H0.8 V11.2 H11 V6.6" fill="none" stroke="#79bbff" stroke-width="1"/><path d="M4.4 7.6 L4.6 5.8 L9.6 0.8 L11.2 2.4 L6.2 7.4 Z" fill="none" stroke="#79bbff" stroke-width="1"/></svg></div><div class="cell" style="left:1752px;top:358px;color:#79bbff"><i class="z">编辑</i></div><div class="a" style="left:1799px;top:360px"><svg width="12" height="12" viewBox="0 0 12 12"><path d="M5.4 1.4 A4.6 4.6 0 1 1 1.9 4.2" fill="none" stroke="#e6a23c" stroke-width="1.1"/><path d="M0.9 1.3 L4.4 1.5 L1.7 4.6 Z" fill="#e6a23c"/></svg></div><div class="cell" style="left:1812px;top:358px;color:#e6a23c"><i class="z">追回</i></div><div class="a" style="left:305px;top:407px;width:14px;height:14px;border:1px solid #dcdfe6;border-radius:2px;background:#fff"></div><div class="cell" style="left:348px;top:407px">15</div><div class="cell" style="left:428px;top:407px;">ZCHq1j4kAfmLYK4gU…</div><div class="a" style="left:588px;top:402px;width:24px;height:24px;border:1px solid #e8ebf3;background:#fafafa"></div><div class="a" style="left:594px;top:408px"><svg width="12" height="12" viewBox="0 0 12 12"><path d="M4.3 1.4 H10.4 V9.5" fill="none" stroke="#555" stroke-width="1.2"/><rect x="1.2" y="3.5" width="7.4" height="6.9" fill="none" stroke="#3a3a3a" stroke-width="1.2"/><path d="M3.2 5.8 H6.6" stroke="#999" stroke-width="1.2"/><path d="M3.2 8.4 H6.6" stroke="#555" stroke-width="1"/></svg></div><div class="a" style="left:638px;top:402px;width:68px;height:24px;border:1px solid #d9ecff;background:#ecf5ff;border-radius:4px"></div><div class="t" style="left:648px;top:408px;font-size:12px;line-height:12px;color:#409eff"><i class="z">注册送卡</i></div><div class="a" style="left:788px;top:404px;width:48px;height:20px;background:#13ce66;border-radius:10px"></div><div class="a" style="left:817px;top:406px;width:16px;height:16px;background:#fff;border-radius:50%"></div><div class="t" style="left:792px;top:408px;font-size:12px;line-height:12px;color:#fff"><i class="z">正常</i></div><div class="a" style="left:869px;top:406px"><svg width="12" height="14" viewBox="0 0 12 14"><circle cx="6" cy="9" r="4.45" fill="none" stroke="#606266" stroke-width="1.1"/><path d="M4.2 2.4 H7.8" stroke="#606266" stroke-width="1.2"/><path d="M6 2.4 V4.6" stroke="#606266" stroke-width="0.9"/><path d="M6 6.4 V9.2" stroke="#606266" stroke-width="1.1"/></svg></div><div class="cell" style="left:892px;top:407px">0<i class="z">天</i></div><div class="a" style="left:989px;top:406px"><svg width="12" height="14" viewBox="0 0 12 14"><circle cx="6" cy="9" r="4.45" fill="none" stroke="#606266" stroke-width="1.1"/><path d="M4.2 2.4 H7.8" stroke="#606266" stroke-width="1.2"/><path d="M6 2.4 V4.6" stroke="#606266" stroke-width="0.9"/><path d="M6 6.4 V9.2" stroke="#606266" stroke-width="1.1"/></svg></div><div class="cell" style="left:1012px;top:407px">0<i class="z">天</i></div><div class="cell" style="left:1108px;top:407px">0</div><div class="cell" style="left:1168px;top:407px">0</div><div class="a" style="left:1228px;top:402px;width:37px;height:24px;border:1px solid #faecd8;background:#fdf6ec;border-radius:4px"></div><div class="t" style="left:1239px;top:408px;font-size:12px;line-height:12px;color:#e6a23c">1/1</div><div class="cell" style="left:1313px;top:407px"><i class="z">系统自动</i></div><div class="cell" style="left:1413px;top:407px">2023-09-25 07:35:08</div><div class="a" style="left:1578px;top:407px"><svg width="15" height="14" viewBox="0 0 15 14"><path d="M6.6 1.2 H2.4 Q1.2 1.2 1.2 2.4 V11.8 Q1.2 13 2.4 13 H11.8 Q13 13 13 11.8 V7" fill="none" stroke="#79bbff" stroke-width="1.3"/><path d="M6.2 8.6 L6.4 6.8 L11.8 1.4 Q12.6 0.7 13.3 1.4 Q14 2.1 13.3 2.9 L7.9 8.3 Z" fill="none" stroke="#79bbff" stroke-width="1.2" stroke-linejoin="round"/></svg></div><div class="cell" style="left:1601px;top:407px"><i class="z">用户注册系</i>…</div><div class="a" style="left:1739px;top:409px"><svg width="12" height="12" viewBox="0 0 12 12"><path d="M5.4 1 H0.8 V11.2 H11 V6.6" fill="none" stroke="#79bbff" stroke-width="1"/><path d="M4.4 7.6 L4.6 5.8 L9.6 0.8 L11.2 2.4 L6.2 7.4 Z" fill="none" stroke="#79bbff" stroke-width="1"/></svg></div><div class="cell" style="left:1752px;top:407px;color:#79bbff"><i class="z">编辑</i></div><div class="a" style="left:1799px;top:409px"><svg width="12" height="12" viewBox="0 0 12 12"><path d="M5.4 1.4 A4.6 4.6 0 1 1 1.9 4.2" fill="none" stroke="#e6a23c" stroke-width="1.1"/><path d="M0.9 1.3 L4.4 1.5 L1.7 4.6 Z" fill="#e6a23c"/></svg></div><div class="cell" style="left:1812px;top:407px;color:#e6a23c"><i class="z">追回</i></div><div class="a" style="left:305px;top:456px;width:14px;height:14px;border:1px solid #dcdfe6;border-radius:2px;background:#fff"></div><div class="cell" style="left:348px;top:456px">14</div><div class="cell" style="left:428px;top:456px;">ZCGq9u1yEixcyEreww…</div><div class="a" style="left:588px;top:451px;width:24px;height:24px;border:1px solid #e8ebf3;background:#fafafa"></div><div class="a" style="left:594px;top:457px"><svg width="12" height="12" viewBox="0 0 12 12"><path d="M4.3 1.4 H10.4 V9.5" fill="none" stroke="#555" stroke-width="1.2"/><rect x="1.2" y="3.5" width="7.4" height="6.9" fill="none" stroke="#3a3a3a" stroke-width="1.2"/><path d="M3.2 5.8 H6.6" stroke="#999" stroke-width="1.2"/><path d="M3.2 8.4 H6.6" stroke="#555" stroke-width="1"/></svg></div><div class="a" style="left:638px;top:451px;width:68px;height:24px;border:1px solid #d9ecff;background:#ecf5ff;border-radius:4px"></div><div class="t" style="left:648px;top:457px;font-size:12px;line-height:12px;color:#409eff"><i class="z">注册送卡</i></div><div class="a" style="left:788px;top:453px;width:48px;height:20px;background:#13ce66;border-radius:10px"></div><div class="a" style="left:817px;top:455px;width:16px;height:16px;background:#fff;border-radius:50%"></div><div class="t" style="left:792px;top:457px;font-size:12px;line-height:12px;color:#fff"><i class="z">正常</i></div><div class="a" style="left:869px;top:455px"><svg width="12" height="14" viewBox="0 0 12 14"><circle cx="6" cy="9" r="4.45" fill="none" stroke="#606266" stroke-width="1.1"/><path d="M4.2 2.4 H7.8" stroke="#606266" stroke-width="1.2"/><path d="M6 2.4 V4.6" stroke="#606266" stroke-width="0.9"/><path d="M6 6.4 V9.2" stroke="#606266" stroke-width="1.1"/></svg></div><div class="cell" style="left:892px;top:456px">0<i class="z">天</i></div><div class="a" style="left:989px;top:455px"><svg width="12" height="14" viewBox="0 0 12 14"><circle cx="6" cy="9" r="4.45" fill="none" stroke="#606266" stroke-width="1.1"/><path d="M4.2 2.4 H7.8" stroke="#606266" stroke-width="1.2"/><path d="M6 2.4 V4.6" stroke="#606266" stroke-width="0.9"/><path d="M6 6.4 V9.2" stroke="#606266" stroke-width="1.1"/></svg></div><div class="cell" style="left:1012px;top:456px">0<i class="z">天</i></div><div class="cell" style="left:1108px;top:456px">0</div><div class="cell" style="left:1168px;top:456px">0</div><div class="a" style="left:1228px;top:451px;width:37px;height:24px;border:1px solid #faecd8;background:#fdf6ec;border-radius:4px"></div><div class="t" style="left:1239px;top:457px;font-size:12px;line-height:12px;color:#e6a23c">1/1</div><div class="cell" style="left:1313px;top:456px"><i class="z">系统自动</i></div><div class="cell" style="left:1413px;top:456px">2023-09-23 00:15:50</div><div class="a" style="left:1578px;top:456px"><svg width="15" height="14" viewBox="0 0 15 14"><path d="M6.6 1.2 H2.4 Q1.2 1.2 1.2 2.4 V11.8 Q1.2 13 2.4 13 H11.8 Q13 13 13 11.8 V7" fill="none" stroke="#79bbff" stroke-width="1.3"/><path d="M6.2 8.6 L6.4 6.8 L11.8 1.4 Q12.6 0.7 13.3 1.4 Q14 2.1 13.3 2.9 L7.9 8.3 Z" fill="none" stroke="#79bbff" stroke-width="1.2" stroke-linejoin="round"/></svg></div><div class="cell" style="left:1601px;top:456px"><i class="z">用户注册系</i>…</div><div class="a" style="left:1739px;top:458px"><svg width="12" height="12" viewBox="0 0 12 12"><path d="M5.4 1 H0.8 V11.2 H11 V6.6" fill="none" stroke="#79bbff" stroke-width="1"/><path d="M4.4 7.6 L4.6 5.8 L9.6 0.8 L11.2 2.4 L6.2 7.4 Z" fill="none" stroke="#79bbff" stroke-width="1"/></svg></div><div class="cell" style="left:1752px;top:456px;color:#79bbff"><i class="z">编辑</i></div><div class="a" style="left:1799px;top:458px"><svg width="12" height="12" viewBox="0 0 12 12"><path d="M5.4 1.4 A4.6 4.6 0 1 1 1.9 4.2" fill="none" stroke="#e6a23c" stroke-width="1.1"/><path d="M0.9 1.3 L4.4 1.5 L1.7 4.6 Z" fill="#e6a23c"/></svg></div><div class="cell" style="left:1812px;top:456px;color:#e6a23c"><i class="z">追回</i></div><div class="a" style="left:305px;top:505px;width:14px;height:14px;border:1px solid #dcdfe6;border-radius:2px;background:#fff"></div><div class="cell" style="left:348px;top:505px">13</div><div class="cell" style="left:428px;top:505px;">ZCtoZNyqNlZep1Hgaw…</div><div class="a" style="left:588px;top:500px;width:24px;height:24px;border:1px solid #e8ebf3;background:#fafafa"></div><div class="a" style="left:594px;top:506px"><svg width="12" height="12" viewBox="0 0 12 12"><path d="M4.3 1.4 H10.4 V9.5" fill="none" stroke="#555" stroke-width="1.2"/><rect x="1.2" y="3.5" width="7.4" height="6.9" fill="none" stroke="#3a3a3a" stroke-width="1.2"/><path d="M3.2 5.8 H6.6" stroke="#999" stroke-width="1.2"/><path d="M3.2 8.4 H6.6" stroke="#555" stroke-width="1"/></svg></div><div class="a" style="left:638px;top:500px;width:68px;height:24px;border:1px solid #d9ecff;background:#ecf5ff;border-radius:4px"></div><div class="t" style="left:648px;top:506px;font-size:12px;line-height:12px;color:#409eff"><i class="z">注册送卡</i></div><div class="a" style="left:788px;top:502px;width:48px;height:20px;background:#13ce66;border-radius:10px"></div><div class="a" style="left:817px;top:504px;width:16px;height:16px;background:#fff;border-radius:50%"></div><div class="t" style="left:792px;top:506px;font-size:12px;line-height:12px;color:#fff"><i class="z">正常</i></div><div class="a" style="left:869px;top:504px"><svg width="12" height="14" viewBox="0 0 12 14"><circle cx="6" cy="9" r="4.45" fill="none" stroke="#606266" stroke-width="1.1"/><path d="M4.2 2.4 H7.8" stroke="#606266" stroke-width="1.2"/><path d="M6 2.4 V4.6" stroke="#606266" stroke-width="0.9"/><path d="M6 6.4 V9.2" stroke="#606266" stroke-width="1.1"/></svg></div><div class="cell" style="left:892px;top:505px">0<i class="z">天</i></div><div class="a" style="left:989px;top:504px"><svg width="12" height="14" viewBox="0 0 12 14"><circle cx="6" cy="9" r="4.45" fill="none" stroke="#606266" stroke-width="1.1"/><path d="M4.2 2.4 H7.8" stroke="#606266" stroke-width="1.2"/><path d="M6 2.4 V4.6" stroke="#606266" stroke-width="0.9"/><path d="M6 6.4 V9.2" stroke="#606266" stroke-width="1.1"/></svg></div><div class="cell" style="left:1012px;top:505px">0<i class="z">天</i></div><div class="cell" style="left:1108px;top:505px">0</div><div class="cell" style="left:1168px;top:505px">0</div><div class="a" style="left:1228px;top:500px;width:37px;height:24px;border:1px solid #faecd8;background:#fdf6ec;border-radius:4px"></div><div class="t" style="left:1239px;top:506px;font-size:12px;line-height:12px;color:#e6a23c">1/1</div><div class="cell" style="left:1313px;top:505px"><i class="z">系统自动</i></div><div class="cell" style="left:1413px;top:505px">2023-09-19 18:51:11</div><div class="a" style="left:1578px;top:505px"><svg width="15" height="14" viewBox="0 0 15 14"><path d="M6.6 1.2 H2.4 Q1.2 1.2 1.2 2.4 V11.8 Q1.2 13 2.4 13 H11.8 Q13 13 13 11.8 V7" fill="none" stroke="#79bbff" stroke-width="1.3"/><path d="M6.2 8.6 L6.4 6.8 L11.8 1.4 Q12.6 0.7 13.3 1.4 Q14 2.1 13.3 2.9 L7.9 8.3 Z" fill="none" stroke="#79bbff" stroke-width="1.2" stroke-linejoin="round"/></svg></div><div class="cell" style="left:1601px;top:505px"><i class="z">用户注册系</i>…</div><div class="a" style="left:1739px;top:507px"><svg width="12" height="12" viewBox="0 0 12 12"><path d="M5.4 1 H0.8 V11.2 H11 V6.6" fill="none" stroke="#79bbff" stroke-width="1"/><path d="M4.4 7.6 L4.6 5.8 L9.6 0.8 L11.2 2.4 L6.2 7.4 Z" fill="none" stroke="#79bbff" stroke-width="1"/></svg></div><div class="cell" style="left:1752px;top:505px;color:#79bbff"><i class="z">编辑</i></div><div class="a" style="left:1799px;top:507px"><svg width="12" height="12" viewBox="0 0 12 12"><path d="M5.4 1.4 A4.6 4.6 0 1 1 1.9 4.2" fill="none" stroke="#e6a23c" stroke-width="1.1"/><path d="M0.9 1.3 L4.4 1.5 L1.7 4.6 Z" fill="#e6a23c"/></svg></div><div class="cell" style="left:1812px;top:505px;color:#e6a23c"><i class="z">追回</i></div><div class="a" style="left:305px;top:554px;width:14px;height:14px;border:1px solid #dcdfe6;border-radius:2px;background:#fff"></div><div class="cell" style="left:348px;top:554px">12</div><div class="cell" style="left:428px;top:554px;">ZChUyHWthAysxF7L9…</div><div class="a" style="left:588px;top:549px;width:24px;height:24px;border:1px solid #e8ebf3;background:#fafafa"></div><div class="a" style="left:594px;top:555px"><svg width="12" height="12" viewBox="0 0 12 12"><path d="M4.3 1.4 H10.4 V9.5" fill="none" stroke="#555" stroke-width="1.2"/><rect x="1.2" y="3.5" width="7.4" height="6.9" fill="none" stroke="#3a3a3a" stroke-width="1.2"/><path d="M3.2 5.8 H6.6" stroke="#999" stroke-width="1.2"/><path d="M3.2 8.4 H6.6" stroke="#555" stroke-width="1"/></svg></div><div class="a" style="left:638px;top:549px;width:68px;height:24px;border:1px solid #d9ecff;background:#ecf5ff;border-radius:4px"></div><div class="t" style="left:648px;top:555px;font-size:12px;line-height:12px;color:#409eff"><i class="z">注册送卡</i></div><div class="a" style="left:788px;top:551px;width:48px;height:20px;background:#13ce66;border-radius:10px"></div><div class="a" style="left:817px;top:553px;width:16px;height:16px;background:#fff;border-radius:50%"></div><div class="t" style="left:792px;top:555px;font-size:12px;line-height:12px;color:#fff"><i class="z">正常</i></div><div class="a" style="left:869px;top:553px"><svg width="12" height="14" viewBox="0 0 12 14"><circle cx="6" cy="9" r="4.45" fill="none" stroke="#606266" stroke-width="1.1"/><path d="M4.2 2.4 H7.8" stroke="#606266" stroke-width="1.2"/><path d="M6 2.4 V4.6" stroke="#606266" stroke-width="0.9"/><path d="M6 6.4 V9.2" stroke="#606266" stroke-width="1.1"/></svg></div><div class="cell" style="left:892px;top:554px">0<i class="z">天</i></div><div class="a" style="left:989px;top:553px"><svg width="12" height="14" viewBox="0 0 12 14"><circle cx="6" cy="9" r="4.45" fill="none" stroke="#606266" stroke-width="1.1"/><path d="M4.2 2.4 H7.8" stroke="#606266" stroke-width="1.2"/><path d="M6 2.4 V4.6" stroke="#606266" stroke-width="0.9"/><path d="M6 6.4 V9.2" stroke="#606266" stroke-width="1.1"/></svg></div><div class="cell" style="left:1012px;top:554px">0<i class="z">天</i></div><div class="cell" style="left:1108px;top:554px">0</div><div class="cell" style="left:1168px;top:554px">0</div><div class="a" style="left:1228px;top:549px;width:37px;height:24px;border:1px solid #faecd8;background:#fdf6ec;border-radius:4px"></div><div class="t" style="left:1239px;top:555px;font-size:12px;line-height:12px;color:#e6a23c">1/1</div><div class="cell" style="left:1313px;top:554px"><i class="z">系统自动</i></div><div class="cell" style="left:1413px;top:554px">2023-09-16 15:19:10</div><div class="a" style="left:1578px;top:554px"><svg width="15" height="14" viewBox="0 0 15 14"><path d="M6.6 1.2 H2.4 Q1.2 1.2 1.2 2.4 V11.8 Q1.2 13 2.4 13 H11.8 Q13 13 13 11.8 V7" fill="none" stroke="#79bbff" stroke-width="1.3"/><path d="M6.2 8.6 L6.4 6.8 L11.8 1.4 Q12.6 0.7 13.3 1.4 Q14 2.1 13.3 2.9 L7.9 8.3 Z" fill="none" stroke="#79bbff" stroke-width="1.2" stroke-linejoin="round"/></svg></div><div class="cell" style="left:1601px;top:554px"><i class="z">用户注册系</i>…</div><div class="a" style="left:1739px;top:556px"><svg width="12" height="12" viewBox="0 0 12 12"><path d="M5.4 1 H0.8 V11.2 H11 V6.6" fill="none" stroke="#79bbff" stroke-width="1"/><path d="M4.4 7.6 L4.6 5.8 L9.6 0.8 L11.2 2.4 L6.2 7.4 Z" fill="none" stroke="#79bbff" stroke-width="1"/></svg></div><div class="cell" style="left:1752px;top:554px;color:#79bbff"><i class="z">编辑</i></div><div class="a" style="left:1799px;top:556px"><svg width="12" height="12" viewBox="0 0 12 12"><path d="M5.4 1.4 A4.6 4.6 0 1 1 1.9 4.2" fill="none" stroke="#e6a23c" stroke-width="1.1"/><path d="M0.9 1.3 L4.4 1.5 L1.7 4.6 Z" fill="#e6a23c"/></svg></div><div class="cell" style="left:1812px;top:554px;color:#e6a23c"><i class="z">追回</i></div><div class="a" style="left:305px;top:603px;width:14px;height:14px;border:1px solid #dcdfe6;border-radius:2px;background:#fff"></div><div class="cell" style="left:348px;top:603px">10</div><div class="cell" style="left:428px;top:603px;">ZCI8tWSXAbugPVmR…</div><div class="a" style="left:588px;top:598px;width:24px;height:24px;border:1px solid #e8ebf3;background:#fafafa"></div><div class="a" style="left:594px;top:604px"><svg width="12" height="12" viewBox="0 0 12 12"><path d="M4.3 1.4 H10.4 V9.5" fill="none" stroke="#555" stroke-width="1.2"/><rect x="1.2" y="3.5" width="7.4" height="6.9" fill="none" stroke="#3a3a3a" stroke-width="1.2"/><path d="M3.2 5.8 H6.6" stroke="#999" stroke-width="1.2"/><path d="M3.2 8.4 H6.6" stroke="#555" stroke-width="1"/></svg></div><div class="a" style="left:638px;top:598px;width:68px;height:24px;border:1px solid #d9ecff;background:#ecf5ff;border-radius:4px"></div><div class="t" style="left:648px;top:604px;font-size:12px;line-height:12px;color:#409eff"><i class="z">注册送卡</i></div><div class="a" style="left:788px;top:600px;width:48px;height:20px;background:#13ce66;border-radius:10px"></div><div class="a" style="left:817px;top:602px;width:16px;height:16px;background:#fff;border-radius:50%"></div><div class="t" style="left:792px;top:604px;font-size:12px;line-height:12px;color:#fff"><i class="z">正常</i></div><div class="a" style="left:869px;top:602px"><svg width="12" height="14" viewBox="0 0 12 14"><circle cx="6" cy="9" r="4.45" fill="none" stroke="#606266" stroke-width="1.1"/><path d="M4.2 2.4 H7.8" stroke="#606266" stroke-width="1.2"/><path d="M6 2.4 V4.6" stroke="#606266" stroke-width="0.9"/><path d="M6 6.4 V9.2" stroke="#606266" stroke-width="1.1"/></svg></div><div class="cell" style="left:892px;top:603px">0<i class="z">天</i></div><div class="a" style="left:989px;top:602px"><svg width="12" height="14" viewBox="0 0 12 14"><circle cx="6" cy="9" r="4.45" fill="none" stroke="#606266" stroke-width="1.1"/><path d="M4.2 2.4 H7.8" stroke="#606266" stroke-width="1.2"/><path d="M6 2.4 V4.6" stroke="#606266" stroke-width="0.9"/><path d="M6 6.4 V9.2" stroke="#606266" stroke-width="1.1"/></svg></div><div class="cell" style="left:1012px;top:603px">0<i class="z">天</i></div><div class="cell" style="left:1108px;top:603px">0</div><div class="cell" style="left:1168px;top:603px">0</div><div class="a" style="left:1228px;top:598px;width:37px;height:24px;border:1px solid #faecd8;background:#fdf6ec;border-radius:4px"></div><div class="t" style="left:1239px;top:604px;font-size:12px;line-height:12px;color:#e6a23c">1/1</div><div class="cell" style="left:1313px;top:603px"><i class="z">系统自动</i></div><div class="cell" style="left:1413px;top:603px">2023-09-15 01:58:14</div><div class="a" style="left:1578px;top:603px"><svg width="15" height="14" viewBox="0 0 15 14"><path d="M6.6 1.2 H2.4 Q1.2 1.2 1.2 2.4 V11.8 Q1.2 13 2.4 13 H11.8 Q13 13 13 11.8 V7" fill="none" stroke="#79bbff" stroke-width="1.3"/><path d="M6.2 8.6 L6.4 6.8 L11.8 1.4 Q12.6 0.7 13.3 1.4 Q14 2.1 13.3 2.9 L7.9 8.3 Z" fill="none" stroke="#79bbff" stroke-width="1.2" stroke-linejoin="round"/></svg></div><div class="cell" style="left:1601px;top:603px"><i class="z">用户注册系</i>…</div><div class="a" style="left:1739px;top:605px"><svg width="12" height="12" viewBox="0 0 12 12"><path d="M5.4 1 H0.8 V11.2 H11 V6.6" fill="none" stroke="#79bbff" stroke-width="1"/><path d="M4.4 7.6 L4.6 5.8 L9.6 0.8 L11.2 2.4 L6.2 7.4 Z" fill="none" stroke="#79bbff" stroke-width="1"/></svg></div><div class="cell" style="left:1752px;top:603px;color:#79bbff"><i class="z">编辑</i></div><div class="a" style="left:1799px;top:605px"><svg width="12" height="12" viewBox="0 0 12 12"><path d="M5.4 1.4 A4.6 4.6 0 1 1 1.9 4.2" fill="none" stroke="#e6a23c" stroke-width="1.1"/><path d="M0.9 1.3 L4.4 1.5 L1.7 4.6 Z" fill="#e6a23c"/></svg></div><div class="cell" style="left:1812px;top:603px;color:#e6a23c"><i class="z">追回</i></div><div class="a" style="left:305px;top:652px;width:14px;height:14px;border:1px solid #dcdfe6;border-radius:2px;background:#fff"></div><div class="cell" style="left:348px;top:652px">9</div><div class="cell" style="left:428px;top:652px;">ZCrTHRAMKTHL2NX2…</div><div class="a" style="left:588px;top:647px;width:24px;height:24px;border:1px solid #e8ebf3;background:#fafafa"></div><div class="a" style="left:594px;top:653px"><svg width="12" height="12" viewBox="0 0 12 12"><path d="M4.3 1.4 H10.4 V9.5" fill="none" stroke="#555" stroke-width="1.2"/><rect x="1.2" y="3.5" width="7.4" height="6.9" fill="none" stroke="#3a3a3a" stroke-width="1.2"/><path d="M3.2 5.8 H6.6" stroke="#999" stroke-width="1.2"/><path d="M3.2 8.4 H6.6" stroke="#555" stroke-width="1"/></svg></div><div class="a" style="left:638px;top:647px;width:68px;height:24px;border:1px solid #d9ecff;background:#ecf5ff;border-radius:4px"></div><div class="t" style="left:648px;top:653px;font-size:12px;line-height:12px;color:#409eff"><i class="z">注册送卡</i></div><div class="a" style="left:788px;top:649px;width:48px;height:20px;background:#13ce66;border-radius:10px"></div><div class="a" style="left:817px;top:651px;width:16px;height:16px;background:#fff;border-radius:50%"></div><div class="t" style="left:792px;top:653px;font-size:12px;line-height:12px;color:#fff"><i class="z">正常</i></div><div class="a" style="left:869px;top:651px"><svg width="12" height="14" viewBox="0 0 12 14"><circle cx="6" cy="9" r="4.45" fill="none" stroke="#606266" stroke-width="1.1"/><path d="M4.2 2.4 H7.8" stroke="#606266" stroke-width="1.2"/><path d="M6 2.4 V4.6" stroke="#606266" stroke-width="0.9"/><path d="M6 6.4 V9.2" stroke="#606266" stroke-width="1.1"/></svg></div><div class="cell" style="left:892px;top:652px">0<i class="z">天</i></div><div class="a" style="left:989px;top:651px"><svg width="12" height="14" viewBox="0 0 12 14"><circle cx="6" cy="9" r="4.45" fill="none" stroke="#606266" stroke-width="1.1"/><path d="M4.2 2.4 H7.8" stroke="#606266" stroke-width="1.2"/><path d="M6 2.4 V4.6" stroke="#606266" stroke-width="0.9"/><path d="M6 6.4 V9.2" stroke="#606266" stroke-width="1.1"/></svg></div><div class="cell" style="left:1012px;top:652px">0<i class="z">天</i></div><div class="cell" style="left:1108px;top:652px">0</div><div class="cell" style="left:1168px;top:652px">0</div><div class="a" style="left:1228px;top:647px;width:37px;height:24px;border:1px solid #faecd8;background:#fdf6ec;border-radius:4px"></div><div class="t" style="left:1239px;top:653px;font-size:12px;line-height:12px;color:#e6a23c">1/1</div><div class="cell" style="left:1313px;top:652px"><i class="z">系统自动</i></div><div class="cell" style="left:1413px;top:652px">2023-09-12 13:07:58</div><div class="a" style="left:1578px;top:652px"><svg width="15" height="14" viewBox="0 0 15 14"><path d="M6.6 1.2 H2.4 Q1.2 1.2 1.2 2.4 V11.8 Q1.2 13 2.4 13 H11.8 Q13 13 13 11.8 V7" fill="none" stroke="#79bbff" stroke-width="1.3"/><path d="M6.2 8.6 L6.4 6.8 L11.8 1.4 Q12.6 0.7 13.3 1.4 Q14 2.1 13.3 2.9 L7.9 8.3 Z" fill="none" stroke="#79bbff" stroke-width="1.2" stroke-linejoin="round"/></svg></div><div class="cell" style="left:1601px;top:652px"><i class="z">用户注册系</i>…</div><div class="a" style="left:1739px;top:654px"><svg width="12" height="12" viewBox="0 0 12 12"><path d="M5.4 1 H0.8 V11.2 H11 V6.6" fill="none" stroke="#79bbff" stroke-width="1"/><path d="M4.4 7.6 L4.6 5.8 L9.6 0.8 L11.2 2.4 L6.2 7.4 Z" fill="none" stroke="#79bbff" stroke-width="1"/></svg></div><div class="cell" style="left:1752px;top:652px;color:#79bbff"><i class="z">编辑</i></div><div class="a" style="left:1799px;top:654px"><svg width="12" height="12" viewBox="0 0 12 12"><path d="M5.4 1.4 A4.6 4.6 0 1 1 1.9 4.2" fill="none" stroke="#e6a23c" stroke-width="1.1"/><path d="M0.9 1.3 L4.4 1.5 L1.7 4.6 Z" fill="#e6a23c"/></svg></div><div class="cell" style="left:1812px;top:652px;color:#e6a23c"><i class="z">追回</i></div><div class="a" style="left:305px;top:701px;width:14px;height:14px;border:1px solid #dcdfe6;border-radius:2px;background:#fff"></div><div class="cell" style="left:348px;top:701px">8</div><div class="cell" style="left:428px;top:701px;">ZCUNHYNJri8xDQKfJ…</div><div class="a" style="left:588px;top:696px;width:24px;height:24px;border:1px solid #e8ebf3;background:#fafafa"></div><div class="a" style="left:594px;top:702px"><svg width="12" height="12" viewBox="0 0 12 12"><path d="M4.3 1.4 H10.4 V9.5" fill="none" stroke="#555" stroke-width="1.2"/><rect x="1.2" y="3.5" width="7.4" height="6.9" fill="none" stroke="#3a3a3a" stroke-width="1.2"/><path d="M3.2 5.8 H6.6" stroke="#999" stroke-width="1.2"/><path d="M3.2 8.4 H6.6" stroke="#555" stroke-width="1"/></svg></div><div class="a" style="left:638px;top:696px;width:68px;height:24px;border:1px solid #d9ecff;background:#ecf5ff;border-radius:4px"></div><div class="t" style="left:648px;top:702px;font-size:12px;line-height:12px;color:#409eff"><i class="z">注册送卡</i></div><div class="a" style="left:788px;top:698px;width:48px;height:20px;background:#13ce66;border-radius:10px"></div><div class="a" style="left:817px;top:700px;width:16px;height:16px;background:#fff;border-radius:50%"></div><div class="t" style="left:792px;top:702px;font-size:12px;line-height:12px;color:#fff"><i class="z">正常</i></div><div class="a" style="left:869px;top:700px"><svg width="12" height="14" viewBox="0 0 12 14"><circle cx="6" cy="9" r="4.45" fill="none" stroke="#606266" stroke-width="1.1"/><path d="M4.2 2.4 H7.8" stroke="#606266" stroke-width="1.2"/><path d="M6 2.4 V4.6" stroke="#606266" stroke-width="0.9"/><path d="M6 6.4 V9.2" stroke="#606266" stroke-width="1.1"/></svg></div><div class="cell" style="left:892px;top:701px">0<i class="z">天</i></div><div class="a" style="left:989px;top:700px"><svg width="12" height="14" viewBox="0 0 12 14"><circle cx="6" cy="9" r="4.45" fill="none" stroke="#606266" stroke-width="1.1"/><path d="M4.2 2.4 H7.8" stroke="#606266" stroke-width="1.2"/><path d="M6 2.4 V4.6" stroke="#606266" stroke-width="0.9"/><path d="M6 6.4 V9.2" stroke="#606266" stroke-width="1.1"/></svg></div><div class="cell" style="left:1012px;top:701px">0<i class="z">天</i></div><div class="cell" style="left:1108px;top:701px">0</div><div class="cell" style="left:1168px;top:701px">0</div><div class="a" style="left:1228px;top:696px;width:37px;height:24px;border:1px solid #faecd8;background:#fdf6ec;border-radius:4px"></div><div class="t" style="left:1239px;top:702px;font-size:12px;line-height:12px;color:#e6a23c">1/1</div><div class="cell" style="left:1313px;top:701px"><i class="z">系统自动</i></div><div class="cell" style="left:1413px;top:701px">2023-09-10 00:55:32</div><div class="a" style="left:1578px;top:701px"><svg width="15" height="14" viewBox="0 0 15 14"><path d="M6.6 1.2 H2.4 Q1.2 1.2 1.2 2.4 V11.8 Q1.2 13 2.4 13 H11.8 Q13 13 13 11.8 V7" fill="none" stroke="#79bbff" stroke-width="1.3"/><path d="M6.2 8.6 L6.4 6.8 L11.8 1.4 Q12.6 0.7 13.3 1.4 Q14 2.1 13.3 2.9 L7.9 8.3 Z" fill="none" stroke="#79bbff" stroke-width="1.2" stroke-linejoin="round"/></svg></div><div class="cell" style="left:1601px;top:701px"><i class="z">用户注册系</i>…</div><div class="a" style="left:1739px;top:703px"><svg width="12" height="12" viewBox="0 0 12 12"><path d="M5.4 1 H0.8 V11.2 H11 V6.6" fill="none" stroke="#79bbff" stroke-width="1"/><path d="M4.4 7.6 L4.6 5.8 L9.6 0.8 L11.2 2.4 L6.2 7.4 Z" fill="none" stroke="#79bbff" stroke-width="1"/></svg></div><div class="cell" style="left:1752px;top:701px;color:#79bbff"><i class="z">编辑</i></div><div class="a" style="left:1799px;top:703px"><svg width="12" height="12" viewBox="0 0 12 12"><path d="M5.4 1.4 A4.6 4.6 0 1 1 1.9 4.2" fill="none" stroke="#e6a23c" stroke-width="1.1"/><path d="M0.9 1.3 L4.4 1.5 L1.7 4.6 Z" fill="#e6a23c"/></svg></div><div class="cell" style="left:1812px;top:701px;color:#e6a23c"><i class="z">追回</i></div><div class="a" style="left:305px;top:750px;width:14px;height:14px;border:1px solid #dcdfe6;border-radius:2px;background:#fff"></div><div class="cell" style="left:348px;top:750px">7</div><div class="cell" style="left:428px;top:750px;">ZCd90G2iU4evryzF7D…</div><div class="a" style="left:588px;top:745px;width:24px;height:24px;border:1px solid #e8ebf3;background:#fafafa"></div><div class="a" style="left:594px;top:751px"><svg width="12" height="12" viewBox="0 0 12 12"><path d="M4.3 1.4 H10.4 V9.5" fill="none" stroke="#555" stroke-width="1.2"/><rect x="1.2" y="3.5" width="7.4" height="6.9" fill="none" stroke="#3a3a3a" stroke-width="1.2"/><path d="M3.2 5.8 H6.6" stroke="#999" stroke-width="1.2"/><path d="M3.2 8.4 H6.6" stroke="#555" stroke-width="1"/></svg></div><div class="a" style="left:638px;top:745px;width:68px;height:24px;border:1px solid #d9ecff;background:#ecf5ff;border-radius:4px"></div><div class="t" style="left:648px;top:751px;font-size:12px;line-height:12px;color:#409eff"><i class="z">注册送卡</i></div><div class="a" style="left:788px;top:747px;width:48px;height:20px;background:#13ce66;border-radius:10px"></div><div class="a" style="left:817px;top:749px;width:16px;height:16px;background:#fff;border-radius:50%"></div><div class="t" style="left:792px;top:751px;font-size:12px;line-height:12px;color:#fff"><i class="z">正常</i></div><div class="a" style="left:869px;top:749px"><svg width="12" height="14" viewBox="0 0 12 14"><circle cx="6" cy="9" r="4.45" fill="none" stroke="#606266" stroke-width="1.1"/><path d="M4.2 2.4 H7.8" stroke="#606266" stroke-width="1.2"/><path d="M6 2.4 V4.6" stroke="#606266" stroke-width="0.9"/><path d="M6 6.4 V9.2" stroke="#606266" stroke-width="1.1"/></svg></div><div class="cell" style="left:892px;top:750px">0<i class="z">天</i></div><div class="a" style="left:989px;top:749px"><svg width="12" height="14" viewBox="0 0 12 14"><circle cx="6" cy="9" r="4.45" fill="none" stroke="#606266" stroke-width="1.1"/><path d="M4.2 2.4 H7.8" stroke="#606266" stroke-width="1.2"/><path d="M6 2.4 V4.6" stroke="#606266" stroke-width="0.9"/><path d="M6 6.4 V9.2" stroke="#606266" stroke-width="1.1"/></svg></div><div class="cell" style="left:1012px;top:750px">0<i class="z">天</i></div><div class="cell" style="left:1108px;top:750px">0</div><div class="cell" style="left:1168px;top:750px">0</div><div class="a" style="left:1228px;top:745px;width:37px;height:24px;border:1px solid #faecd8;background:#fdf6ec;border-radius:4px"></div><div class="t" style="left:1239px;top:751px;font-size:12px;line-height:12px;color:#e6a23c">1/1</div><div class="cell" style="left:1313px;top:750px"><i class="z">系统自动</i></div><div class="cell" style="left:1413px;top:750px">2023-09-07 17:18:22</div><div class="a" style="left:1578px;top:750px"><svg width="15" height="14" viewBox="0 0 15 14"><path d="M6.6 1.2 H2.4 Q1.2 1.2 1.2 2.4 V11.8 Q1.2 13 2.4 13 H11.8 Q13 13 13 11.8 V7" fill="none" stroke="#79bbff" stroke-width="1.3"/><path d="M6.2 8.6 L6.4 6.8 L11.8 1.4 Q12.6 0.7 13.3 1.4 Q14 2.1 13.3 2.9 L7.9 8.3 Z" fill="none" stroke="#79bbff" stroke-width="1.2" stroke-linejoin="round"/></svg></div><div class="cell" style="left:1601px;top:750px"><i class="z">用户注册系</i>…</div><div class="a" style="left:1739px;top:752px"><svg width="12" height="12" viewBox="0 0 12 12"><path d="M5.4 1 H0.8 V11.2 H11 V6.6" fill="none" stroke="#79bbff" stroke-width="1"/><path d="M4.4 7.6 L4.6 5.8 L9.6 0.8 L11.2 2.4 L6.2 7.4 Z" fill="none" stroke="#79bbff" stroke-width="1"/></svg></div><div class="cell" style="left:1752px;top:750px;color:#79bbff"><i class="z">编辑</i></div><div class="a" style="left:1799px;top:752px"><svg width="12" height="12" viewBox="0 0 12 12"><path d="M5.4 1.4 A4.6 4.6 0 1 1 1.9 4.2" fill="none" stroke="#e6a23c" stroke-width="1.1"/><path d="M0.9 1.3 L4.4 1.5 L1.7 4.6 Z" fill="#e6a23c"/></svg></div><div class="cell" style="left:1812px;top:750px;color:#e6a23c"><i class="z">追回</i></div><div class="t" style="left:1467px;top:803px;font-size:12px;line-height:12px;color:#606266"><i class="z">共</i> 16 <i class="z">条</i></div><div class="a" style="left:1527px;top:797px;width:100px;height:24px;border:1px solid #dcdfe6;border-radius:3px;background:#fff"></div><div class="t" style="left:1546px;top:803px;font-size:12px;line-height:12px;color:#606266">10<i class="z">条</i>/<i class="z">页</i></div><div class="a" style="left:1608px;top:807px;width:9px;height:5px;color:#c0c4cc"><svg width="9" height="5" viewBox="0 0 9 5"><path d="M0.8 0.6 L4.5 4.2 L8.2 0.6" fill="none" stroke="currentColor" stroke-width="1"/></svg></div><div class="a" style="left:1651.5px;top:804.5px"><svg width="6" height="9" viewBox="0 0 6 9"><path d="M5.5 0.5 L1 4.5 L5.5 8.5" fill="none" stroke="#c0c4cc" stroke-width="1"/></svg></div><div class="t" style="left:1676px;top:803px;font-size:12px;line-height:12px;color:#409eff;font-weight:bold">1</div><div class="t" style="left:1699.5px;top:803px;font-size:12px;line-height:12px;color:#303133">2</div><div class="a" style="left:1724px;top:804.5px"><svg width="6" height="9" viewBox="0 0 6 9"><path d="M0.5 0.5 L5 4.5 L0.5 8.5" fill="none" stroke="#303133" stroke-width="1"/></svg></div><div class="t" style="left:1755px;top:803px;font-size:12px;line-height:12px;color:#606266"><i class="z">前往</i></div><div class="a" style="left:1787px;top:797px;width:56px;height:24px;border:1px solid #dcdfe6;border-radius:3px;background:#fff"></div><div class="t" style="left:1812px;top:803px;font-size:12px;line-height:12px;color:#606266">1</div><div class="t" style="left:1850px;top:803px;font-size:12px;line-height:12px;color:#606266"><i class="z">页</i></div>
</body></html>
